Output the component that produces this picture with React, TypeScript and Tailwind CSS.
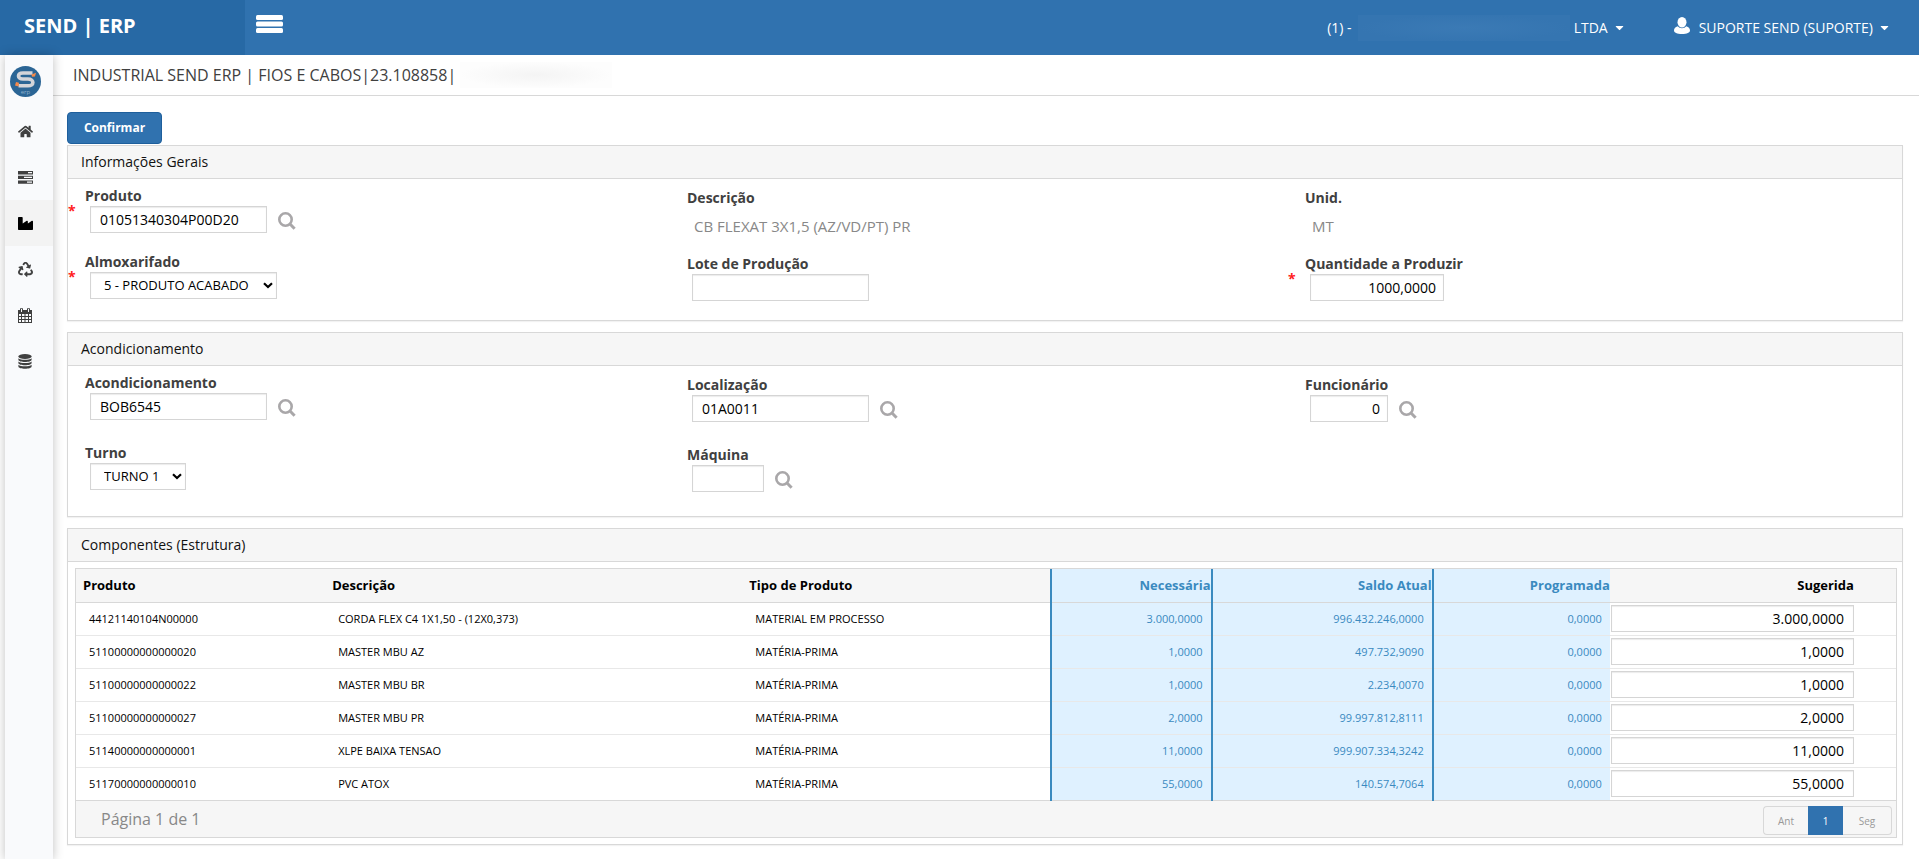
import type { ReactNode } from "react";
import { FaCaretDown, FaHome, FaIndustry, FaRecycle } from "react-icons/fa";

type FieldProps = { id: string; label: string; required?: boolean; raised?: boolean; children: ReactNode };

const controlClass =
  "h-[27px] border border-[#d5d5d5] bg-white text-black shadow-[inset_0_1px_1px_rgba(0,0,0,0.08)] outline-none";

function Field({ id, label, required, raised, children }: FieldProps) {
  return (
    <div className={raised ? "flex min-h-[49px]" : "flex min-h-[49px] pt-[2px]"}>
      <span className="w-[17px] shrink-0 pt-[15px] text-[14px] font-bold leading-[20px] text-[#ff2020]">
        {required ? "*" : ""}
      </span>
      <div>
        <label htmlFor={id} className="block text-[14px] font-bold leading-[20px] text-[#404040]">
          {label}
        </label>
        <div className="flex items-center pl-[5px]">{children}</div>
      </div>
    </div>
  );
}

function TextBox({ id, value, width, right }: { id: string; value: string; width: string; right?: boolean }) {
  return (
    <input
      id={id}
      type="text"
      defaultValue={value}
      className={`${controlClass} ${width} ${right ? "px-[7px] text-right" : "px-[9px]"} text-[14px]`}
    />
  );
}

function Choice({ id, value, width }: { id: string; value: string; width: string }) {
  return (
    <div className={`relative ${width}`}>
      <select
        id={id}
        defaultValue={value}
        className={`${controlClass} w-full appearance-none pr-[20px] pl-[13px] text-[13px]`}
      >
        <option>{value}</option>
      </select>
      <svg viewBox="0 0 10 7" className="pointer-events-none absolute top-[10px] right-[4px] h-[7px] w-[10px]">
        <path d="M1 1.2 5 5l4-3.8" fill="none" stroke="#000" strokeWidth="2.2" />
      </svg>
    </div>
  );
}

function SearchButton({ label }: { label: string }) {
  return (
    <button type="button" aria-label={label} className="ml-[11px] mt-[2px]">
      <svg viewBox="0 0 18 18" className="h-[18px] w-[18px]" fill="none" stroke="#a9a7a9">
        <circle cx="7.5" cy="7.5" r="6.2" strokeWidth="2.6" />
        <path d="M12 12l4.600 4.800" strokeWidth="3" />
      </svg>
    </button>
  );
}

function Panel({ title, children }: { title: string; children: ReactNode }) {
  return (
    <section className="border border-[#d8d8d8] bg-white shadow-[0_1px_1px_rgba(0,0,0,0.05)]">
      <h2 className="border-b border-[#d8d8d8] bg-[#f6f6f6] px-[13px] py-[6px] text-[14px] leading-[20px] text-[#111]">
        {title}
      </h2>
      {children}
    </section>
  );
}

function TasksIcon() {
  return (
    <svg viewBox="0 0 15 13" className="h-[13px] w-[15px]" fillRule="evenodd" fill="currentColor">
      <path d="M0 0h15v3.400H0zM10 1h4v1.300h-4z" />
      <path d="M0 4.700h15v3.400H0zM6 5.800h8v1.200H6z" />
      <path d="M0 9.400h15v3.400H0zM9 10.500h5v1.200H9z" />
    </svg>
  );
}

function CalendarIcon() {
  return (
    <svg viewBox="0 0 14 15" className="h-[15px] w-[14px]" fill="currentColor">
      <path
        fillRule="evenodd"
        d="M0 2h2V.5C2 0 5 0 5 .5V2h4V.5C9 0 12 0 12 .5V2h2v13H0zM3 1v3h1V1zm7 0v3h1V1zM1 6v2h2V6zm3 0v2h2.500V6zm3.500 0v2H10V6zM11 6v2h2V6zM1 9v2h2V9zm3 0v2h2.500V9zm3.500 0v2H10V9zM11 9v2h2V9zM1 12v2h2v-2zm3 0v2h2.500v-2zm3.500 0v2H10v-2zm3.500 0v2h2v-2z"
      />
    </svg>
  );
}

function DatabaseIcon() {
  return (
    <svg viewBox="0 0 14 15" className="h-[15px] w-[14px]" fill="currentColor">
      <ellipse cx="7" cy="2.500" rx="6.600" ry="2.500" />
      <path d="M.4 4.200c2 2 11.200 2 13.200 0v1.600c0 3-13.200 3-13.200 0z" />
      <path d="M.4 7.500c2 2 11.200 2 13.200 0v1.600c0 3-13.200 3-13.200 0z" />
      <path d="M.4 10.800c2 2 11.200 2 13.200 0v1.600c0 3-13.200 3-13.200 0z" />
    </svg>
  );
}

function BrandMark() {
  return (
    <svg viewBox="0 0 31 31" className="h-[31px] w-[31px]">
      <circle cx="15.500" cy="15.500" r="15.500" fill="#2b6595" />
      <path
        d="M22.500 7H13C7 7 7 13 13 13h5c6.500 0 6.500 6.800 0 6.800H8.500"
        fill="none"
        stroke="#d3d4d9"
        strokeWidth="3.600"
      />
      <path d="M21.500 8.500 26 6.800 25 10.500l-3 .3z" fill="#f5894a" />
      <path d="M5 19.500 6 16l3 .8-.5 3.700z" fill="#f5894a" />
      <text x="15.500" y="27.500" textAnchor="middle" fontSize="6" fill="#8fb0cc" fontFamily="Open Sans, sans-serif">
        erp
      </text>
    </svg>
  );
}

const menu = [
  { label: "Início", icon: <FaHome size={15} /> },
  { label: "Cadastros", icon: <TasksIcon /> },
  { label: "Industrial", icon: <FaIndustry size={15} />, active: true },
  { label: "Processos", icon: <FaRecycle size={15} /> },
  { label: "Agenda", icon: <CalendarIcon /> },
  { label: "Dados", icon: <DatabaseIcon /> },
];

const rows = [
  ["44121140104N00000", "CORDA FLEX C4 1X1,50 - (12X0,373)", "MATERIAL EM PROCESSO", "3.000,0000", "996.432.246,0000", "0,0000"],
  ["51100000000000020", "MASTER MBU AZ", "MATÉRIA-PRIMA", "1,0000", "497.732,9090", "0,0000"],
  ["51100000000000022", "MASTER MBU BR", "MATÉRIA-PRIMA", "1,0000", "2.234,0070", "0,0000"],
  ["51100000000000027", "MASTER MBU PR", "MATÉRIA-PRIMA", "2,0000", "99.997.812,8111", "0,0000"],
  ["51140000000000001", "XLPE BAIXA TENSAO", "MATÉRIA-PRIMA", "11,0000", "999.907.334,3242", "0,0000"],
  ["51170000000000010", "PVC ATOX", "MATÉRIA-PRIMA", "55,0000", "140.574,7064", "0,0000"],
];

const leftHead = "pl-[7px] text-left";
const blueHead = "bg-[#dff1ff] text-right text-[#3a8abf]";
const leftCell = "pl-[13px]";
const blueCell = "bg-[#dff1ff] pr-[8px] text-right text-[#3a8abf]";
const divider = "border-l-2 border-l-[#3a8abf]";

export default function App() {
  return (
    <div className="flex min-h-screen flex-col bg-white font-['Open_Sans',sans-serif] text-[#404040]">
      <header className="flex h-[55px] items-center bg-[#3072af] text-white">
        <div className="flex h-full w-[245px] items-center bg-[#2769a5] pb-[4px] pl-[24px] text-[20px] font-bold leading-[24px]">
          SEND | ERP
        </div>
        <button type="button" aria-label="Alternar menu" className="mb-[7px] ml-[11px]">
          <svg viewBox="0 0 27 18" className="h-[18px] w-[27px]" fill="#fff">
            <rect width="27" height="5" rx="1.500" />
            <rect y="6.500" width="27" height="5" rx="1.500" />
            <rect y="13" width="27" height="5" rx="1.500" />
          </svg>
        </button>
        <div className="ml-auto flex items-center pr-[28px] text-[14px] leading-[20px]">
          <button type="button" className="flex items-center">
            <span>(1) -</span>
            <span className="mr-[4px] ml-[6px] h-[26px] w-[212px] bg-[radial-gradient(closest-side,#3b7ab5,#3575b1)]" />
            <span>LTDA</span>
            <FaCaretDown size={13} className="ml-[5px]" />
          </button>
          <button type="button" className="ml-[48px] flex items-center">
            <svg viewBox="0 0 16 17" className="mr-[9px] mb-[4px] h-[17px] w-[16px]" fill="#fff">
              <ellipse cx="8" cy="5.300" rx="4.500" ry="5.300" />
              <path d="M3.800 9.200C5.500 11.800 10.500 11.800 12.200 9.200 15 10 16 11.500 16 13.500 16 15.500 13 17 8 17s-8-1.500-8-3.500c0-2 1-3.500 3.800-4.300z" />
            </svg>
            <span>SUPORTE SEND (SUPORTE)</span>
            <FaCaretDown size={13} className="ml-[5px]" />
          </button>
        </div>
      </header>

      <div className="flex grow">
        <nav className="relative z-10 ml-[5px] flex w-[48px] shrink-0 flex-col bg-[#f9fafc] pt-[11px] shadow-[0_0_10px_rgba(0,0,0,0.25)]">
          <a href="#inicio" aria-label="SEND ERP" className="mb-[11px] ml-[5px] block h-[31px] w-[31px]">
            <BrandMark />
          </a>
          {menu.map((item) => (
            <a
              key={item.label}
              href="#menu"
              aria-label={item.label}
              className={
                item.active
                  ? "flex h-[46px] items-center bg-[#f3f3f3] pl-[13px] text-black"
                  : "flex h-[46px] items-center pl-[13px] text-[#404040]"
              }
            >
              {item.icon}
            </a>
          ))}
        </nav>

        <main className="min-w-0 grow">
          <div className="flex h-[41px] items-center border-b border-[#d8d8d8] pl-[20px] text-[16px] leading-[24px]">
            INDUSTRIAL SEND ERP | FIOS E CABOS|23.108858|
            <span className="ml-[4px] h-[26px] w-[152px] bg-[radial-gradient(closest-side,#f4f4f4,#fdfdfd)]" />
          </div>

          <div className="pt-[16px] pr-[16px] pb-[15px] pl-[14px]">
            <button
              type="button"
              className="mb-px block h-[32px] w-[95px] rounded-[4px] border border-[#1e5f9c] bg-[#3072af] text-[12px] font-bold leading-[20px] text-white"
            >
              Confirmar
            </button>

            <div className="flex flex-col gap-[11px]">
              <Panel title="Informações Gerais">
                <div className="grid grid-cols-[602fr_618fr_614fr] gap-y-[16px] pt-[7px] pb-[19px]">
                  <Field id="produto" label="Produto" required raised>
                    <TextBox id="produto" value="01051340304P00D20" width="w-[177px]" />
                    <SearchButton label="Buscar produto" />
                  </Field>
                  <Field id="descricao" label="Descrição">
                    <output id="descricao" className="pt-[8px] pl-[2px] text-[15px] leading-[20px] text-[#888]">
                      CB FLEXAT 3X1,5 (AZ/VD/PT) PR
                    </output>
                  </Field>
                  <Field id="unidade" label="Unid.">
                    <output id="unidade" className="pt-[8px] pl-[2px] text-[15px] leading-[20px] text-[#888]">
                      MT
                    </output>
                  </Field>
                  <Field id="almoxarifado" label="Almoxarifado" required raised>
                    <Choice id="almoxarifado" value="5 - PRODUTO ACABADO" width="w-[187px]" />
                  </Field>
                  <Field id="lote" label="Lote de Produção">
                    <TextBox id="lote" value="" width="w-[177px]" />
                  </Field>
                  <Field id="quantidade" label="Quantidade a Produzir" required>
                    <TextBox id="quantidade" value="1000,0000" width="w-[134px]" right />
                  </Field>
                </div>
              </Panel>

              <Panel title="Acondicionamento">
                <div className="grid grid-cols-[602fr_618fr_614fr] gap-y-[21px] pt-[7px] pb-[24px]">
                  <Field id="acondicionamento" label="Acondicionamento" raised>
                    <TextBox id="acondicionamento" value="BOB6545" width="w-[177px]" />
                    <SearchButton label="Buscar acondicionamento" />
                  </Field>
                  <Field id="localizacao" label="Localização">
                    <TextBox id="localizacao" value="01A0011" width="w-[177px]" />
                    <SearchButton label="Buscar localização" />
                  </Field>
                  <Field id="funcionario" label="Funcionário">
                    <TextBox id="funcionario" value="0" width="w-[78px]" right />
                    <SearchButton label="Buscar funcionário" />
                  </Field>
                  <Field id="turno" label="Turno" raised>
                    <Choice id="turno" value="TURNO 1" width="w-[96px]" />
                  </Field>
                  <Field id="maquina" label="Máquina">
                    <TextBox id="maquina" value="" width="w-[72px]" />
                    <SearchButton label="Buscar máquina" />
                  </Field>
                </div>
              </Panel>

              <Panel title="Componentes (Estrutura)">
                <div className="mt-[6px] mr-[5px] mb-[6px] ml-[7px] border border-[#d8d8d8]">
                  <table className="w-full table-fixed border-collapse">
                    <colgroup>
                      <col className="w-[249px]" />
                      <col className="w-[417px]" />
                      <col className="w-[308px]" />
                      <col className="w-[161px]" />
                      <col className="w-[221px]" />
                      <col className="w-[177px]" />
                      <col className="w-[244px]" />
                      <col className="w-[42px]" />
                    </colgroup>
                    <thead>
                      <tr className="h-[33px] border-b border-[#d8d8d8] bg-[#f6f6f6] text-[13px] font-bold leading-[20px] text-black">
                        <th scope="col" className={leftHead}>Produto</th>
                        <th scope="col" className={leftHead}>Descrição</th>
                        <th scope="col" className={leftHead}>Tipo de Produto</th>
                        <th scope="col" className={`${blueHead} ${divider}`}>Necessária</th>
                        <th scope="col" className={`${blueHead} ${divider}`}>Saldo Atual</th>
                        <th scope="col" className={`${blueHead} ${divider}`}>Programada</th>
                        <th scope="col" className="text-right">Sugerida</th>
                        <td />
                      </tr>
                    </thead>
                    <tbody>
                      {rows.map((row) => (
                        <tr key={row[0]} className="h-[33px] border-b border-[#e8e8e8] text-[11px] leading-[16px] text-black last:border-[#d8d8d8]">
                          <td className={leftCell}>{row[0]}</td>
                          <td className={leftCell}>{row[1]}</td>
                          <td className={leftCell}>{row[2]}</td>
                          <td className={`${blueCell} ${divider}`}>{row[3]}</td>
                          <td className={`${blueCell} ${divider}`}>{row[4]}</td>
                          <td className={`${blueCell} ${divider}`}>{row[5]}</td>
                          <td className="pl-px">
                            <input
                              type="text"
                              aria-label={`Sugerida ${row[1]}`}
                              defaultValue={row[3]}
                              className={`${controlClass} block w-full px-[9px] text-right text-[14px]`}
                            />
                          </td>
                          <td />
                        </tr>
                      ))}
                    </tbody>
                  </table>
                  <div className="flex h-[36px] items-center justify-between bg-[#f6f6f6] pr-[4px] pl-[25px]">
                    <span className="text-[16px] leading-[20px] text-[#888]">Página 1 de 1</span>
                    <div className="mt-[4px] flex h-[29px] text-[10px] leading-[16px] text-[#999]">
                      <button type="button" className="w-[45px] rounded-l-[4px] border border-r-0 border-[#d8d8d8]">Ant</button>
                      <button type="button" className="w-[35px] bg-[#3072af] text-white">1</button>
                      <button type="button" className="w-[49px] rounded-r-[4px] border border-l-0 border-[#d8d8d8]">Seg</button>
                    </div>
                  </div>
                </div>
              </Panel>
            </div>
          </div>
        </main>
      </div>
    </div>
  );
}
